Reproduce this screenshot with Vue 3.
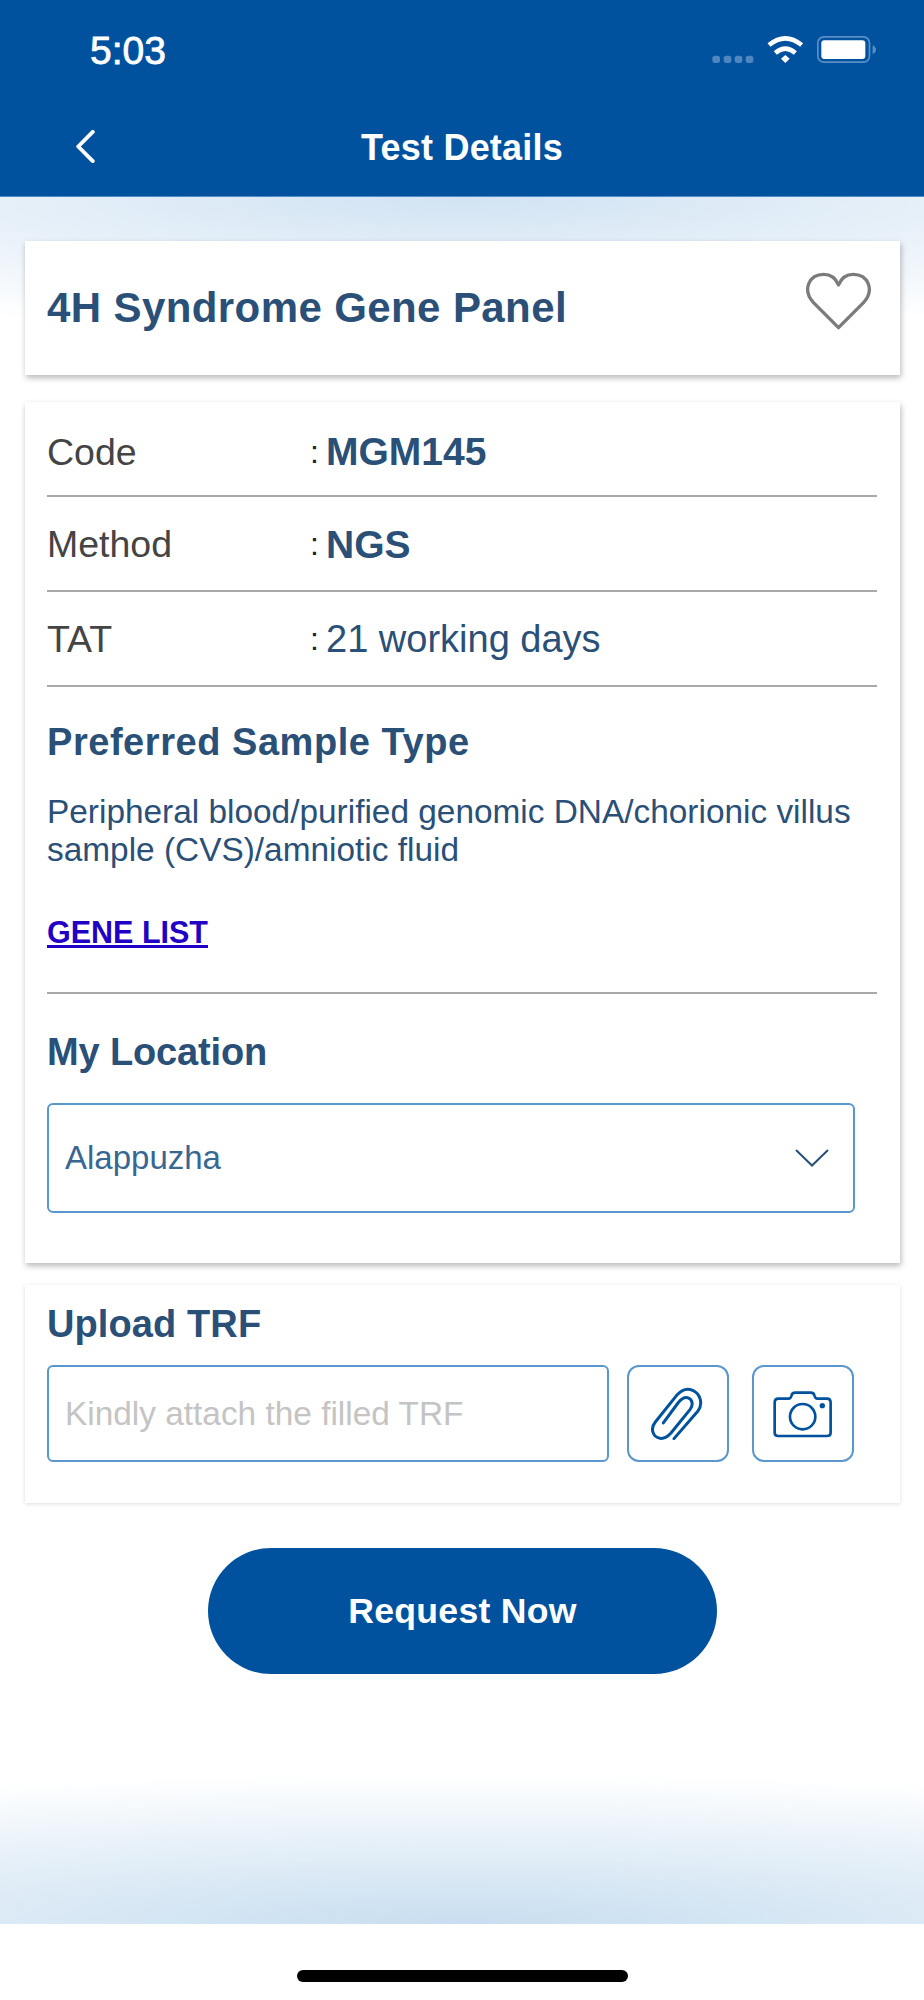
<script setup>
const rows = [
  { label: 'Code', value: 'MGM145', bold: true },
  { label: 'Method', value: 'NGS', bold: true },
  { label: 'TAT', value: '21 working days', bold: false },
]
</script>

<template>
  <div class="phone">
    <header class="header">
      <div class="status">
        <span class="time">5:03</span>
        <svg class="status-icons" viewBox="90 70 510 100" aria-hidden="true">
          <g fill="#4f86bf">
            <rect x="97" y="138" width="23" height="22" rx="8" />
            <rect x="131" y="138" width="23" height="22" rx="8" />
            <rect x="164" y="138" width="23" height="22" rx="8" />
            <rect x="197" y="138" width="23" height="22" rx="8" />
          </g>
          <g fill="none" stroke="#fff" stroke-width="14">
            <path d="M267 106 Q316 66 365 106" />
            <path d="M286 130 Q316 104 346 130" />
          </g>
          <path d="M303 147 L316 136 L329 147 L316 160 Z" fill="#fff" />
          <rect x="413.5" y="81.5" width="155" height="76" rx="18" fill="none" stroke="#5a8fc6" stroke-width="5" />
          <rect x="424" y="92" width="132" height="56" rx="9" fill="#fff" />
          <path d="M578 107 Q588 112 588 120 Q588 128 578 133 Z" fill="#5a8fc6" />
        </svg>
      </div>
      <nav class="nav">
        <svg class="back" viewBox="0 0 20 34" aria-hidden="true">
          <path d="M18 2 L3 17 L18 32" fill="none" stroke="#fff" stroke-width="4" stroke-linecap="round" stroke-linejoin="round" />
        </svg>
        <h1 class="nav-title">Test Details</h1>
      </nav>
    </header>

    <main class="content">
      <section class="card title-card">
        <h2 class="test-name">4H Syndrome Gene Panel</h2>
        <svg class="heart" viewBox="140 62 200 180" aria-hidden="true">
          <path d="M240 232 L165 157 C130 118 152 72 196 72 C216 72 232 84 240 104 C248 84 264 72 284 72 C328 72 350 118 315 157 Z" fill="none" stroke="#7b7b7b" stroke-width="10" stroke-linejoin="round" />
        </svg>
      </section>

      <section class="card info-card">
        <div v-for="row in rows" :key="row.label" class="row">
          <span class="row-label">{{ row.label }}</span>
          <span class="row-colon">:</span>
          <span class="row-value" :class="{ strong: row.bold }">{{ row.value }}</span>
        </div>

        <div class="sample">
          <h3 class="heading heading-wide">Preferred Sample Type</h3>
          <p class="sample-text">Peripheral blood/purified genomic DNA/chorionic villus sample (CVS)/amniotic fluid</p>
          <a class="gene-link" href="#">GENE LIST</a>
        </div>

        <div class="location">
          <h3 class="heading heading-tight">My Location</h3>
          <div class="select">
            <span class="select-text">Alappuzha</span>
            <svg class="select-arrow" viewBox="0 0 34 18" aria-hidden="true">
              <path d="M1 1 L17 16.5 L33 1" fill="none" stroke="#2a5078" stroke-width="2" />
            </svg>
          </div>
        </div>
      </section>

      <section class="card upload-card">
        <h3 class="heading">Upload TRF</h3>
        <div class="upload-row">
          <div class="upload-input">Kindly attach the filled TRF</div>
          <button class="icon-btn" type="button" aria-label="Attach">
            <svg class="clip" viewBox="155 140 160 160" aria-hidden="true">
              <path d="M224 295 L296 212 C312 190 303 160 280 150 C262 142 245 150 232 165 L168 245 C152 265 160 290 182 294 C196 296 206 288 215 278 L272 208 C283 194 280 176 264 172 C252 170 244 178 236 188 L192 248" fill="none" stroke="#00529f" stroke-width="9" stroke-linecap="round" stroke-linejoin="round" />
            </svg>
          </button>
          <button class="icon-btn" type="button" aria-label="Camera">
            <svg class="camera" viewBox="515 145 190 150" aria-hidden="true">
              <path d="M537 174 H568 Q574 174 576 166 Q578 156 588 156 H634 Q644 156 646 166 Q648 174 654 174 H683 Q694 174 694 186 V276 Q694 286 683 286 H537 Q526 286 526 276 V186 Q526 174 537 174 Z" fill="none" stroke="#00529f" stroke-width="8" />
              <circle cx="610" cy="228" r="38" fill="none" stroke="#00529f" stroke-width="8" />
              <circle cx="669" cy="195" r="8" fill="#00529f" />
            </svg>
          </button>
        </div>
      </section>

      <button class="request" type="button">Request Now</button>
    </main>

    <footer class="home">
      <span class="home-bar"></span>
    </footer>
  </div>
</template>

<style scoped>
.phone {
  width: 924px;
  height: 2000px;
  display: flex;
  flex-direction: column;
  background: #fff;
  font-family: "Liberation Sans", Arial, sans-serif;
  overflow: hidden;
}
.header {
  height: 197px;
  flex: none;
  background: #00529f;
  border-bottom: 1px solid #4f8cc6;
  box-sizing: border-box;
  color: #fff;
}
.status {
  height: 100px;
  padding: 33px 44px 0 90px;
  box-sizing: border-box;
  display: flex;
  justify-content: space-between;
  align-items: flex-start;
}
.time {
  font-size: 39px;
  line-height: 36px;
  font-weight: 400;
  -webkit-text-stroke: 0.8px #fff;
}
.status-icons {
  width: 170px;
  height: 33.33px;
}
.nav {
  position: relative;
  height: 70px;
  display: flex;
  align-items: center;
  justify-content: center;
}
.back {
  position: absolute;
  left: 75px;
  top: 30px;
  width: 20px;
  height: 33px;
}
.nav-title {
  margin: 0;
  font-size: 36px;
  line-height: 40px;
  font-weight: 700;
  padding-top: 26px;
  letter-spacing: 0.2px;
}
.content {
  height: 1727px;
  flex: none;
  box-sizing: border-box;
  padding: 44px 24px 0 25px;
  background:
    radial-gradient(ellipse 110% 135px at 50% 0, #d1e3f3 0%, rgba(209, 227, 243, 0) 100%),
    radial-gradient(ellipse 140% 150px at 50% 100%, #c8def0 0%, rgba(200, 222, 240, 0) 100%),
    #fff;
  display: flex;
  flex-direction: column;
}
.card {
  background: #fff;
  box-sizing: border-box;
  box-shadow: 1px 3px 6px rgba(0, 0, 0, 0.28);
}
.title-card {
  height: 134px;
  padding: 0 28px 0 22px;
  display: flex;
  align-items: center;
  justify-content: space-between;
}
.test-name {
  margin: 0;
  font-size: 42px;
  line-height: 46px;
  font-weight: 700;
  color: #2a5078;
  letter-spacing: 0.4px;
}
.heart {
  width: 67px;
  height: 60px;
  margin-bottom: 14px;
}
.info-card {
  margin-top: 27px;
  height: 861px;
  padding: 0 23px 0 22px;
}
.row {
  height: 95px;
  box-sizing: border-box;
  padding-top: 2px;
  border-bottom: 2px solid #a9a9a9;
  display: flex;
  align-items: center;
}
.row:first-child {
  padding-top: 7px;
}
.row-label {
  width: 263px;
  font-size: 37.5px;
  color: #444;
}
.row-colon {
  width: 16px;
  font-size: 32px;
  color: #222;
}
.row-value {
  font-size: 38px;
  color: #2a5078;
}
.row-value.strong {
  font-size: 39px;
  font-weight: 700;
}
.sample {
  padding-top: 34px;
  height: 307px;
  box-sizing: border-box;
  border-bottom: 2px solid #a9a9a9;
}
.heading {
  margin: 0;
  font-size: 38px;
  line-height: 42px;
  font-weight: 700;
  color: #2a5078;
  letter-spacing: 0.1px;
}
.heading-wide {
  letter-spacing: 0.55px;
}
.heading-tight {
  letter-spacing: -0.15px;
}
.sample-text {
  margin: 30px 0 0;
  font-size: 33.4px;
  line-height: 38px;
  color: #2a5078;
}
.gene-link {
  display: inline-block;
  margin-top: 45px;
  font-size: 30.5px;
  line-height: 36px;
  font-weight: 700;
  color: #1f00c4;
  text-decoration: underline;
}
.location {
  padding-top: 37px;
}
.select {
  margin-top: 30px;
  width: 808px;
  height: 110px;
  box-sizing: border-box;
  border: 2px solid #5b97cf;
  border-radius: 6px;
  padding: 0 24px 0 16px;
  display: flex;
  align-items: center;
  justify-content: space-between;
}
.select-text {
  font-size: 33px;
  color: #386792;
}
.select-arrow {
  width: 34px;
  height: 18px;
}
.upload-card {
  margin-top: 22px;
  height: 218px;
  padding: 18px 23px 0 22px;
  box-shadow: 0 1px 4px rgba(0, 0, 0, 0.14);
}
.upload-row {
  margin-top: 20px;
  display: flex;
  height: 97px;
}
.upload-input {
  width: 562px;
  box-sizing: border-box;
  border: 2px solid #5b97cf;
  border-radius: 6px;
  padding-left: 16px;
  display: flex;
  align-items: center;
  font-size: 33.4px;
  color: #c4c4c4;
  margin-right: 18px;
}
.icon-btn {
  width: 102px;
  padding: 0;
  box-sizing: border-box;
  background: #fff;
  border: 2px solid #5b97cf;
  border-radius: 12px;
  display: flex;
  align-items: center;
  justify-content: center;
  margin-right: 23px;
}
.icon-btn:last-child {
  margin-right: 0;
}
.clip {
  width: 53.3px;
  height: 53.3px;
}
.camera {
  width: 63.3px;
  height: 50px;
}
.request {
  margin: 45px 0 0 183px;
  width: 509px;
  height: 126px;
  padding-top: 2px;
  border: 0;
  border-radius: 63px;
  background: #00529f;
  color: #fff;
  font-family: inherit;
  font-size: 35.6px;
  font-weight: 700;
  letter-spacing: 0.3px;
}
.home {
  height: 76px;
  flex: none;
  display: flex;
  justify-content: center;
  padding-top: 46px;
  box-sizing: border-box;
}
.home-bar {
  width: 331px;
  height: 12px;
  border-radius: 6px;
  background: #000;
}
</style>
